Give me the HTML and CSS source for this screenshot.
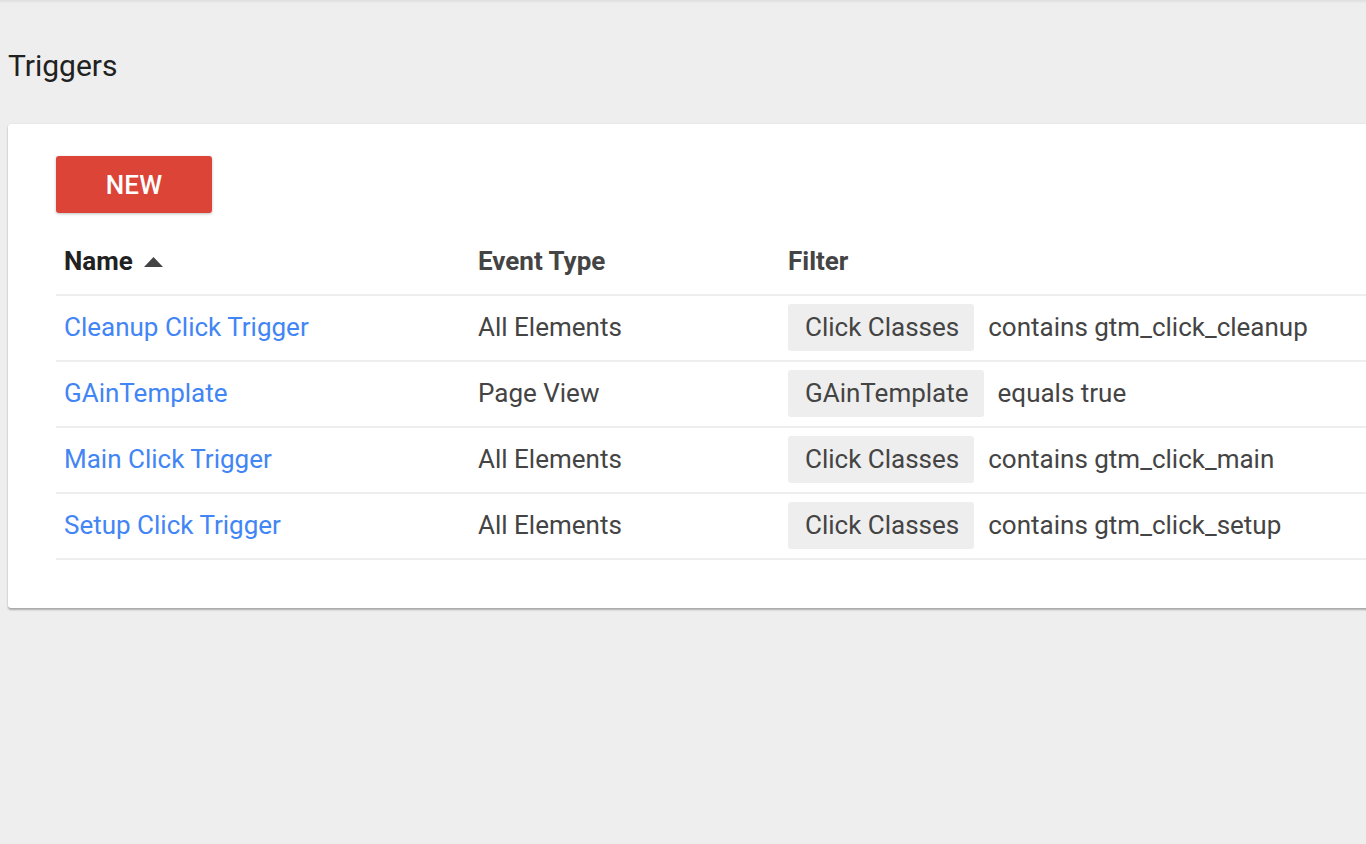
FILE: index.html
```html
<!DOCTYPE html>
<html lang="en">
<head>
<meta charset="utf-8">
<title>Triggers</title>
<link rel="stylesheet" href="styles.css">
</head>
<body>
<div class="topbar"></div>
<main class="page">
  <h1 class="page-title">Triggers</h1>
  <section class="card">
    <button class="btn-new" type="button">NEW</button>
    <table class="list">
      <colgroup>
        <col class="col-name">
        <col class="col-type">
        <col class="col-filter">
      </colgroup>
      <thead>
        <tr>
          <th class="sorted">Name <span class="sort-arrow"><svg width="19" height="10" viewBox="0 0 19 10"><path d="M0 10 L9.5 0 L19 10 Z" fill="#444"/></svg></span></th>
          <th>Event Type</th>
          <th>Filter</th>
        </tr>
      </thead>
      <tbody>
        <tr>
          <td><a class="link" href="#">Cleanup Click Trigger</a></td>
          <td>All Elements</td>
          <td><div class="filter"><span class="chip">Click Classes</span><span>contains gtm_click_cleanup</span></div></td>
        </tr>
        <tr>
          <td><a class="link" href="#">GAinTemplate</a></td>
          <td>Page View</td>
          <td><div class="filter"><span class="chip">GAinTemplate</span><span>equals true</span></div></td>
        </tr>
        <tr>
          <td><a class="link" href="#">Main Click Trigger</a></td>
          <td>All Elements</td>
          <td><div class="filter"><span class="chip">Click Classes</span><span>contains gtm_click_main</span></div></td>
        </tr>
        <tr>
          <td><a class="link" href="#">Setup Click Trigger</a></td>
          <td>All Elements</td>
          <td><div class="filter"><span class="chip">Click Classes</span><span>contains gtm_click_setup</span></div></td>
        </tr>
      </tbody>
    </table>
  </section>
</main>
</body>
</html>
```

FILE: styles.css
```css
html, body {
  margin: 0;
  padding: 0;
  height: 100%;
}
body {
  background: #eeeeee;
  font-family: Roboto, "Liberation Sans", Arial, sans-serif;
  color: #444444;
  overflow: hidden;
}
.topbar {
  height: 0;
  box-shadow: 0 0 3px 1px rgba(0, 0, 0, 0.12);
}
.page {
  padding: 48px 0 0 8px;
}
.page-title {
  margin: 0;
  font-size: 30px;
  line-height: 36px;
  font-weight: 400;
  color: #212121;
}
.card {
  margin-top: 40px;
  width: 1420px;
  background: #ffffff;
  border-radius: 3px;
  box-shadow: 0 2px 2px rgba(0, 0, 0, 0.28), 0 0 2px rgba(0, 0, 0, 0.1);
  padding: 32px 48px 48px 48px;
  box-sizing: border-box;
}
.btn-new {
  display: block;
  width: 156px;
  height: 57px;
  border: none;
  border-radius: 3px;
  background: #db4437;
  color: #ffffff;
  font-family: Roboto, "Liberation Sans", Arial, sans-serif;
  font-size: 26px;
  font-weight: 500;
  letter-spacing: 0.2px;
  box-shadow: 0 1px 3px rgba(0, 0, 0, 0.25);
  cursor: pointer;
}
.list {
  margin-top: 16px;
  width: 100%;
  border-collapse: collapse;
  table-layout: fixed;
  font-size: 26px;
}
.col-name { width: 414px; }
.col-type { width: 310px; }
.list th,
.list td {
  text-align: left;
  padding: 0 0 2px 8px;
  height: 62px;
  border-bottom: 2px solid #eeeeee;
  white-space: nowrap;
  vertical-align: middle;
}
.list th {
  height: 63px;
  font-weight: 700;
  color: #444444;
}
.list th.sorted {
  color: #212121;
}
.sort-arrow {
  display: inline-block;
  margin-left: 5px;
  vertical-align: 3px;
}
.sort-arrow svg {
  display: block;
}
.link {
  color: #4285f4;
  text-decoration: none;
}
.filter {
  display: flex;
  align-items: center;
  gap: 14px;
}
.chip {
  display: inline-flex;
  align-items: center;
  height: 47px;
  padding: 0 15px 0 17px;
  background: #eeeeee;
  border-radius: 3px;
}
```
